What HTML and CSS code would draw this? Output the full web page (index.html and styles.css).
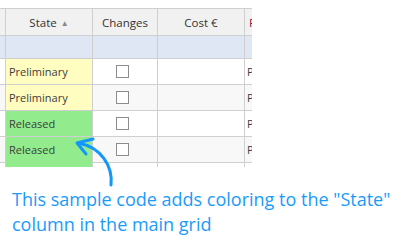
FILE: index.html
```html
<!DOCTYPE html>
<html lang="en">
<head>
  <meta charset="UTF-8" />
  <title>Grid state coloring</title>
  <link rel="stylesheet" href="styles.css">
</head>
<body>
  <div class="grid-clip">
    <div class="grid">
      <!-- header -->
      <div class="cell head"></div>
      <div class="cell head center">State <span class="sort">&#9650;</span></div>
      <div class="cell head center">Changes</div>
      <div class="cell head center">Cost &euro;</div>
      <div class="cell head extra-head">Priority</div>

      <!-- filter row -->
      <div class="cell filter"></div>
      <div class="cell filter"></div>
      <div class="cell filter"></div>
      <div class="cell filter"></div>
      <div class="cell filter"></div>

      <div class="cell"></div>
      <div class="cell state prelim">Preliminary</div>
      <div class="cell check"><span class="box"></span></div>
      <div class="cell"></div>
      <div class="cell extra">Plan</div>

      <div class="cell alt"></div>
      <div class="cell state prelim">Preliminary</div>
      <div class="cell alt check"><span class="box"></span></div>
      <div class="cell alt"></div>
      <div class="cell alt extra">Plan</div>

      <div class="cell"></div>
      <div class="cell state released">Released</div>
      <div class="cell check"><span class="box"></span></div>
      <div class="cell"></div>
      <div class="cell extra">Plan</div>

      <div class="cell alt"></div>
      <div class="cell state released last">Released</div>
      <div class="cell alt check"><span class="box"></span></div>
      <div class="cell alt"></div>
      <div class="cell alt extra">Plan</div>

      <!-- partial next row -->
      <div class="cell stub"></div>
      <div class="cell stub released"></div>
      <div class="cell stub"></div>
      <div class="cell stub"></div>
      <div class="cell stub"></div>
    </div>
  </div>

  <p class="caption">This sample code adds coloring to the "State" column in the main grid</p>

  <svg class="arrow" width="408" height="241" viewBox="0 0 408 241">
    <path d="M111 185 C113 166 101 147 78 143" fill="none" stroke="#1497fb" stroke-width="3" stroke-linecap="round"/>
    <path d="M93 139 L77 143 L86 154" fill="none" stroke="#1497fb" stroke-width="3" stroke-linecap="round" stroke-linejoin="round"/>
  </svg>
</body>
</html>
```

FILE: styles.css
```css
* {
  margin: 0;
  padding: 0;
  box-sizing: border-box;
}

body {
  width: 408px;
  height: 241px;
  background: #fff;
  position: relative;
  overflow: hidden;
  font-family: 'Open Sans', sans-serif;
}

.grid-clip {
  width: 252px;
  overflow: hidden;
  padding-top: 8px;
}

.grid {
  display: grid;
  grid-template-columns: 6px 87px 65px 87px 60px;
  grid-template-rows: 27px 23px 26px 26px 26px 26px 4px;
  width: 305px;
  border-top: 1px solid #cfcfcf;
  font-size: 11px;
  color: #3c3c3c;
}

.cell {
  border-right: 1px solid #cfcfcf;
  border-bottom: 1px solid #cfcfcf;
  display: flex;
  align-items: center;
  white-space: nowrap;
  overflow: hidden;
}

.head {
  background: #f1f1f1;
  color: #333;
  font-size: 11.5px;
}

.center {
  justify-content: center;
}

.sort {
  font-size: 8px;
  color: #888;
  margin-left: 4px;
  margin-top: 1px;
}

.extra-head {
  padding-left: 4px;
  color: #8e1b2a;
}

.filter {
  background: #dfe7f5;
}

.alt {
  background: #f8f8f8;
}

.state {
  padding-left: 3px;
}

.prelim {
  background: #fffdbf;
}

.released {
  background: #92ec8e;
}

.state.last {
  border-bottom-color: #92ec8e;
}

.check {
  justify-content: center;
  padding-right: 5px;
}

.box {
  width: 13px;
  height: 13px;
  border: 1px solid #8c8c8c;
  background: #fff;
}

.extra {
  padding-left: 2px;
}

.stub {
  border-bottom: none;
}

.caption {
  margin-top: 20px;
  padding-left: 12px;
  width: 408px;
  font-family: 'Open Sans', sans-serif;
  font-size: 18px;
  line-height: 25px;
  color: #1a9bfb;
}

.arrow {
  position: absolute;
  top: 0;
  left: 0;
  pointer-events: none;
}
```
